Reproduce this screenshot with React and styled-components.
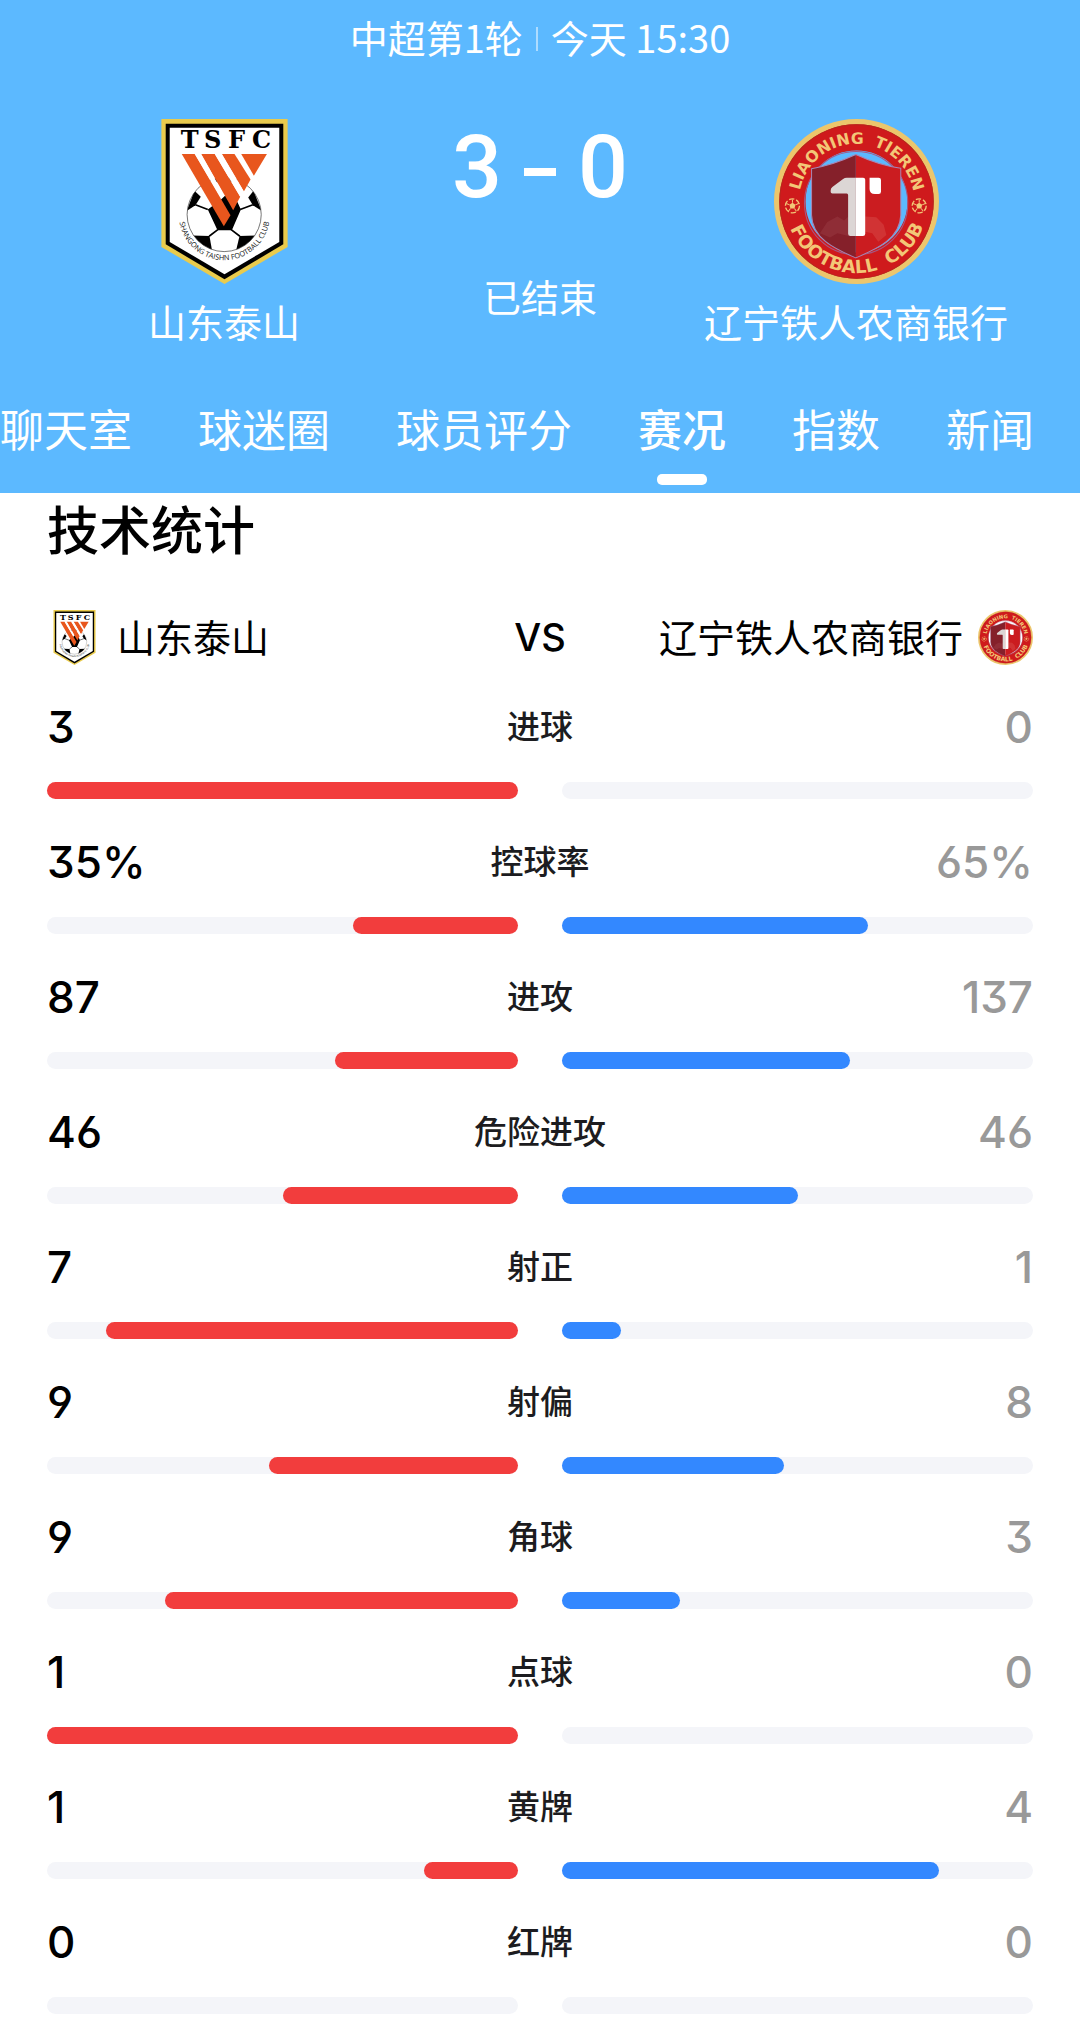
import { useState } from "react";
import styled, { createGlobalStyle } from "styled-components";

const GlobalStyle = createGlobalStyle`
* {
  box-sizing: border-box;
}
body {
  margin: 0;
  background: #fff;
  color: #000;
  font-family: "Noto Sans CJK SC", "Noto Sans", sans-serif;
}
`

const Header = styled.header`
background: #5cb9ff;
color: #fff;
overflow: hidden;
`

const MatchInfo = styled.div`
display: flex;
justify-content: center;
align-items: center;
gap: 13px;
padding-bottom: 2px;
font-size: 38px;
line-height: 74px;
`

const Divider = styled.span`
width: 2px;
height: 24px;
margin-top: 4px;
background: rgba(255, 255, 255, 0.5);
`

const Match = styled.div`
display: flex;
align-items: flex-start;
padding-top: 43px;
`

const Team = styled.div`
flex: 1 1 0;
display: flex;
flex-direction: column;
align-items: center;
gap: 10px;
font-size: 38px;
line-height: 54px;
white-space: nowrap;
`

const Result = styled.div`
width: 184px;
display: flex;
flex-direction: column;
align-items: center;
gap: 54px;
font-size: 38px;
line-height: 54px;
`

const Score = styled.div`
display: flex;
align-items: center;
gap: 22px;
font-family: Roboto, sans-serif;
font-size: 88px;
font-weight: 500;
line-height: 96px;
`

const Dash = styled.span`
width: 32px;
height: 8px;
margin-top: 10px;
background: #fff;
`

const Tabs = styled.nav`
display: flex;
gap: 66px;
padding: 48px 0 8px;
`

const Tab = styled.button`
display: flex;
flex-direction: column;
align-items: center;
gap: 14px;
flex: none;
padding: 0;
border: none;
background: transparent;
color: #fff;
font-family: inherit;
font-size: 44px;
font-weight: ${props => props.$active ? 500 : 400};
line-height: 64px;
cursor: pointer;

&::after {
  content: "";
  width: 50px;
  height: 11px;
  border-radius: 5px;
  background: ${props => props.$active ? "#fff" : "transparent"};
}
`

const Stats = styled.main`
padding: 0 47px;
`

const Title = styled.h1`
margin: 0;
font-size: 52px;
font-weight: 500;
line-height: 70px;
`

const Versus = styled.div`
display: grid;
grid-template-columns: 1fr auto 1fr;
align-items: center;
margin: 46px 0 32px;
font-size: 38px;
line-height: 56px;
white-space: nowrap;
`

const VersusTeam = styled.div`
display: flex;
align-items: flex-start;
gap: 15px;
line-height: 52px;
justify-content: ${props => props.$end ? "flex-end" : "flex-start"};
`

const VersusText = styled.span`
font-family: Inter, sans-serif;
font-weight: 500;
`

const StatList = styled.ul`
display: flex;
flex-direction: column;
gap: 33px;
margin: 0;
padding: 0;
list-style: none;
`

const StatRow = styled.li`
display: flex;
flex-direction: column;
gap: 25px;
`

const StatHead = styled.div`
display: grid;
grid-template-columns: 1fr auto 1fr;
align-items: start;
line-height: 60px;
`

const StatLabel = styled.span`
color: #1c1c20;
font-size: 33px;
font-weight: 500;
line-height: 57px;
`

const StatValue = styled.span`
color: ${props => props.$away ? "#999" : "#000"};
text-align: ${props => props.$away ? "right" : "left"};
font-family: Inter, sans-serif;
font-size: 44px;
font-weight: 500;
font-feature-settings: "cv03", "cv04", "cv09";
`

const Bars = styled.div`
display: flex;
gap: 44px;
`

const Track = styled.div`
flex: 1;
display: flex;
justify-content: ${props => props.$away ? "flex-start" : "flex-end"};
height: 17px;
border-radius: 9px;
background: #f4f5f9;
`

const Fill = styled.div`
height: 17px;
border-radius: 9px;
background: ${props => props.$away ? "#3388ff" : "#f23d3d"};
`

const Crest = styled.svg`
display: block;
flex: none;
width: ${props => props.$size}px;
height: ${props => props.$size}px;
`

const tabs = ["聊天室", "球迷圈", "球员评分", "赛况", "指数", "新闻"];

const stats = [
  { label: "进球", home: 3, away: 0 },
  { label: "控球率", home: 35, away: 65, unit: "%" },
  { label: "进攻", home: 87, away: 137 },
  { label: "危险进攻", home: 46, away: 46 },
  { label: "射正", home: 7, away: 1 },
  { label: "射偏", home: 9, away: 8 },
  { label: "角球", home: 9, away: 3 },
  { label: "点球", home: 1, away: 0 },
  { label: "黄牌", home: 1, away: 4 },
  { label: "红牌", home: 0, away: 0 },
];

// Shandong Taishan: pennant with a football and four orange stripes
function HomeCrest({ size, id })
{
return(
    <Crest $size={size} viewBox="64 57 378 494" role="img" aria-label="山东泰山">
      <path d="M64 57H442V440L253 551L64 440Z" fill="#e9cb4d" />
      <path d="M77 71H429V432L253 537L77 432Z" fill="#000" />
      <path d="M89 83H417V425L253 522L89 425Z" fill="#fff" />
      <text x="149 218 289 364" y="144" textAnchor="middle" fontFamily="DejaVu Serif" fontWeight="700" fontSize="72">TSFC</text>
      <clipPath id={`${id}-ball`}><circle cx="252" cy="343" r="111" /></clipPath>
      <g clipPath={`url(#${id}-ball)`}>
        <path d="M210 240L232 246H272L292 238L252 228Z" />
        <path d="M203 328L240 300L262 280L292 306L302 328L275 390H232Z" />
        <path d="M140 332L163 272L182 290L166 315Z" />
        <path d="M364 332L340 272L324 292L338 315Z" />
        <path d="M156 406L208 407L217 458L184 450Z" />
        <path d="M350 406L298 407L286 458L320 450Z" />
        <path d="M166 314L203 328M338 314L300 328M233 388L207 408M273 388L299 408" stroke="#000" strokeWidth="5" fill="none" />
      </g>
      <circle cx="252" cy="343" r="111" fill="none" stroke="#333" strokeWidth="2" />
      <g fill="#e8561d">
        <path d="M125 162H164L271 345L251 378Z" />
        <path d="M183 162H224L300 290L279 330Z" />
        <path d="M245 162H283L331 238L311 274Z" />
        <path d="M303 162H380L341 227Z" />
      </g>
      <g fill="#fff">
        <path d="M164 162H183L246 275L240 289Z" />
        <path d="M224 162H245L311 274L300 290Z" />
      </g>
      <path id={`${id}-arc`} d="M118 364A136 136 0 0 0 387 364" fill="none" />
      <text fontFamily="Open Sans" fontSize="22" textAnchor="middle" fill="#111">
        <textPath href={`#${id}-arc`} startOffset="50%">SHANGONG TAISHN FOOTBALL CLUB</textPath>
      </text>
    </Crest>
    );
}

// Liaoning Tieren: red ring with gold lettering round a two-tone shield
function AwayCrest({ size, id })
{
return(
    <Crest $size={size} viewBox="73 59 492 492" role="img" aria-label="辽宁铁人农商银行">
      <circle cx="319" cy="305" r="237" fill="none" stroke="#ecc66c" strokeWidth="18" />
      <circle cx="319" cy="305" r="191" fill="none" stroke="#cf1a1c" strokeWidth="78" />
      <circle cx="319" cy="305" r="229" fill="none" stroke="#b5281c" strokeWidth="3" />
      <circle cx="318" cy="310" r="154" fill="none" stroke="#a45a86" strokeWidth="3" />
      <path d="M317 165Q248 197 185 207V345C187 414 252 446 317 473Z" fill="#85202a" />
      <path d="M317 165Q386 197 451 206V345C449 414 382 446 317 473Z" fill="#cb1c20" />
      <path d="M317 165Q386 197 451 206V345C449 414 382 446 317 473C252 446 187 414 185 345V207Q248 197 317 165Z" fill="none" stroke="#a886b4" strokeWidth="3" />
      <path d="M210 400L232 366L262 350L282 362L295 350V408L262 400L240 412Z" fill="#b0545a" opacity="0.25" />
      <path d="M345 350L378 352L400 374L408 405L384 425L366 400L345 395Z" fill="#e26a62" opacity="0.3" />
      <path d="M317 234H290Q284 234 279 238L247 262Q242 266 242 272V277Q242 281 247 281H290Q294 281 294 286V401Q294 408 301 408H317Z" fill="#dcd6d5" />
      <path d="M317 234H339Q345 234 345 240V401Q345 408 338 408H317Z" fill="#fff" />
      <path d="M358 234H385Q392 234 392 241V276Q392 283 385 283H374Q358 283 358 268Z" fill="#fff" />
      <path id={`${id}-top`} d="M147 305A172 172 0 0 1 491 305" fill="none" />
      <path id={`${id}-bottom`} d="M106 305A213 213 0 0 0 532 305" fill="none" />
      <g fill="#f3c777" fontFamily="DejaVu Sans" fontWeight="700">
        <g fontSize="47" textAnchor="middle">
          <text><textPath href={`#${id}-top`} startOffset="30%">LIAONING</textPath></text>
          <text><textPath href={`#${id}-top`} startOffset="77%">TIEREN</textPath></text>
        </g>
        <g fontSize="54" textAnchor="middle">
          <text><textPath href={`#${id}-bottom`} startOffset="36%">FOOTBALL</textPath></text>
          <text><textPath href={`#${id}-bottom`} startOffset="77%">CLUB</textPath></text>
        </g>
      </g>
      {[128, 506].map(x => (
        <g key={x} transform={`translate(${x} 318)`} fill="#f3c777">
          <circle r="21" fill="none" stroke="#f3c777" strokeWidth="4" strokeDasharray="16 6" />
          <path d="M0 -9L9 -3L6 8H-6L-9 -3Z" />
          <path d="M0 -9V-19M9 -3L18 -7M6 8L12 16M-6 8L-12 16M-9 -3L-18 -7" stroke="#f3c777" strokeWidth="3" />
        </g>
      ))}
    </Crest>
    );
}

// One side of a comparison bar, home grows leftwards and away grows rightwards
function Bar({ value, total, away })
{
const share = total ? value / total * 100 : 0;
return(
    <Track $away={away}>
      <Fill $away={away} style={{ width: `${share}%` }} />
    </Track>
    );
}

function Stat({ label, home, away, unit = "" })
{
return(
    <StatRow>
      <StatHead>
        <StatValue>{home}{unit}</StatValue>
        <StatLabel>{label}</StatLabel>
        <StatValue $away>{away}{unit}</StatValue>
      </StatHead>
      <Bars>
        <Bar value={home} total={home + away} />
        <Bar value={away} total={home + away} away />
      </Bars>
    </StatRow>
    );
}

export default function App()
{
const [active, setActive] = useState("赛况");

return(
    <>
      <GlobalStyle />
      <Header>
        <MatchInfo>
          <span>中超第1轮</span>
          <Divider />
          <span>今天 15:30</span>
        </MatchInfo>
        <Match>
          <Team>
            <HomeCrest size={165} id="home" />
            <span>山东泰山</span>
          </Team>
          <Result>
            <Score><span>3</span><Dash /><span>0</span></Score>
            <span>已结束</span>
          </Result>
          <Team>
            <AwayCrest size={165} id="away" />
            <span>辽宁铁人农商银行</span>
          </Team>
        </Match>
        <Tabs>
          {tabs.map(tab => (
            <Tab key={tab} $active={tab === active} onClick={() => setActive(tab)}>{tab}</Tab>
          ))}
        </Tabs>
      </Header>
      <Stats>
        <Title>技术统计</Title>
        <Versus>
          <VersusTeam>
            <HomeCrest size={55} id="home-small" />
            <span>山东泰山</span>
          </VersusTeam>
          <VersusText>VS</VersusText>
          <VersusTeam $end>
            <span>辽宁铁人农商银行</span>
            <AwayCrest size={55} id="away-small" />
          </VersusTeam>
        </Versus>
        <StatList>
          {stats.map(stat => <Stat key={stat.label} {...stat} />)}
        </StatList>
      </Stats>
    </>
    );
}
